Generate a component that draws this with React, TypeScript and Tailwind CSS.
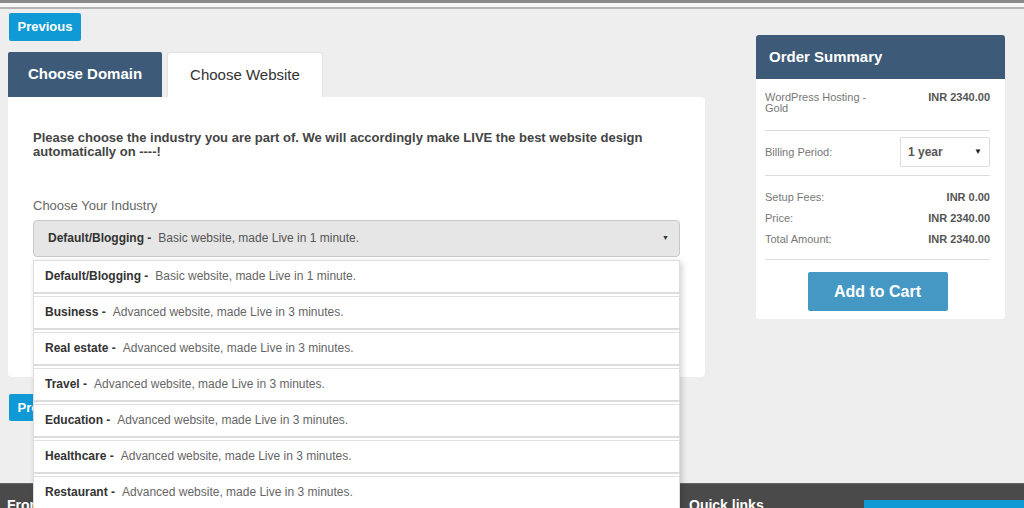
import React from "react";

const industries = [
  { name: "Default/Blogging", desc: "Basic website, made Live in 1 minute." },
  { name: "Business", desc: "Advanced website, made Live in 3 minutes." },
  { name: "Real estate", desc: "Advanced website, made Live in 3 minutes." },
  { name: "Travel", desc: "Advanced website, made Live in 3 minutes." },
  { name: "Education", desc: "Advanced website, made Live in 3 minutes." },
  { name: "Healthcare", desc: "Advanced website, made Live in 3 minutes." },
  { name: "Restaurant", desc: "Advanced website, made Live in 3 minutes." },
];

const font = { fontFamily: '"Liberation Sans", Arial, sans-serif' };

function SummaryRow({ label, value }: { label: string; value: string }) {
  return (
    <div className="flex items-center justify-between text-[11px] leading-[21px]">
      <span className="text-[#777]">{label}</span>
      <span className="font-bold text-[#555]">{value}</span>
    </div>
  );
}

export default function App() {
  return (
    <div className="relative h-[508px] w-[1024px] overflow-hidden bg-[#eeeeee]" style={font}>
      <div className="h-[3px] bg-[#8a8a8a]" />
      <div className="h-[4px] bg-[#f7f7f7]" />
      <div className="h-[2px] bg-[#b5b5b5]" />

      <div className="flex px-2">
        <div className="w-[697px]">
          <button className="ml-px mt-1 h-[28px] w-[72px] rounded-[2px] bg-[#0f9ad6] text-[13px] font-bold text-white">
            Previous
          </button>

          <div className="mt-[11px] flex gap-[5px]">
            <div className="flex h-[45px] w-[154px] items-center justify-center rounded-t-[2px] bg-[#3d5a78] text-[15px] font-bold text-white">
              Choose Domain
            </div>
            <div className="flex h-[45px] w-[156px] items-center justify-center rounded-t-[3px] border border-b-0 border-[#e2e2e2] bg-white text-[15px] text-[#333]">
              Choose Website
            </div>
          </div>

          <div className="h-[280px] rounded-b-[4px] rounded-tr-[4px] bg-white px-[25px] pt-[34px]">
            <p className="text-[13px] font-bold leading-[14px] text-[#444]">
              Please choose the industry you are part of. We will accordingly make LIVE the best website design
              <br />
              automatically on ----!
            </p>
            <div className="mt-[37px] text-[13px] text-[#666]">Choose Your Industry</div>
            <div className="relative mt-[4px]">
              <div className="flex h-[37px] items-center rounded-[4px] border border-[#c8c8c8] bg-[#e6e6e6] pl-[14px] pr-[10px] text-[12px]">
                <span className="font-bold text-[#333]">Default/Blogging -</span>
                <span className="ml-[7px] text-[#555]">Basic website, made Live in 1 minute.</span>
                <span className="ml-auto text-[7px] text-[#333]">▼</span>
              </div>
              <div className="absolute left-0 top-[40px] z-10 w-[647px] border border-[#ddd] bg-white shadow-[2px_2px_6px_rgba(0,0,0,0.18)]">
                {industries.map((item) => (
                  <div key={item.name} className="border-b border-[#e0e0e0] pb-[2px]">
                    <div className="flex h-[33px] items-center border-b-2 border-[#dcdcdc] pl-[11px] text-[12px]">
                      <span className="font-bold text-[#333]">{item.name} -</span>
                      <span className="ml-[7px] text-[#666]">{item.desc}</span>
                    </div>
                  </div>
                ))}
              </div>
            </div>
          </div>

          <button className="ml-px mt-[17px] h-[27px] w-[72px] rounded-[2px] bg-[#0f9ad6] text-[13px] font-bold text-white">
            Previous
          </button>
        </div>

        <div className="ml-[51px] mt-[26px] w-[249px]">
          <div className="flex h-[44px] items-center rounded-t-[3px] bg-[#3d5a78] px-[13px] text-[15px] font-bold text-white">
            Order Summary
          </div>
          <div className="rounded-b-[3px] bg-white pb-[8px] pl-[9px] pr-[15px] pt-[13px]">
            <div className="flex items-start justify-between border-b border-[#ddd] pb-[16px]">
              <span className="w-[110px] text-[11px] leading-[11px] text-[#777]">WordPress Hosting - Gold</span>
              <span className="text-[11px] font-bold leading-[11px] text-[#555]">INR 2340.00</span>
            </div>
            <div className="flex items-center justify-between border-b border-[#ddd] pb-[8px] pt-[6px]">
              <span className="text-[11px] text-[#777]">Billing Period:</span>
              <div className="flex h-[30px] w-[90px] items-center justify-between rounded-[2px] border border-[#ddd] px-[7px]">
                <span className="text-[12px] font-bold text-[#555]">1 year</span>
                <span className="text-[8px] text-[#222]">▼</span>
              </div>
            </div>
            <div className="border-b border-[#ddd] pb-[9px] pt-[11px]">
              <SummaryRow label="Setup Fees:" value="INR 0.00" />
              <SummaryRow label="Price:" value="INR 2340.00" />
              <SummaryRow label="Total Amount:" value="INR 2340.00" />
            </div>
            <div className="flex justify-center pt-[12px]">
              <button className="h-[39px] w-[140px] rounded-[2px] bg-[#4597c4] text-[16px] font-bold text-white">
                Add to Cart
              </button>
            </div>
          </div>
        </div>
      </div>

      <div className="absolute bottom-0 left-0 right-0 flex h-[25px] items-start border-t border-[#666] bg-[#4a4a4a]">
        <span className="ml-[7px] mt-[13px] text-[14px] font-bold leading-[16px] text-white">From</span>
        <span className="ml-[647px] mt-[13px] text-[14px] font-bold leading-[16px] text-white">Quick links</span>
        <div className="ml-auto mt-[16px] h-[10px] w-[160px] bg-[#0f9ad6]" />
      </div>
    </div>
  );
}
